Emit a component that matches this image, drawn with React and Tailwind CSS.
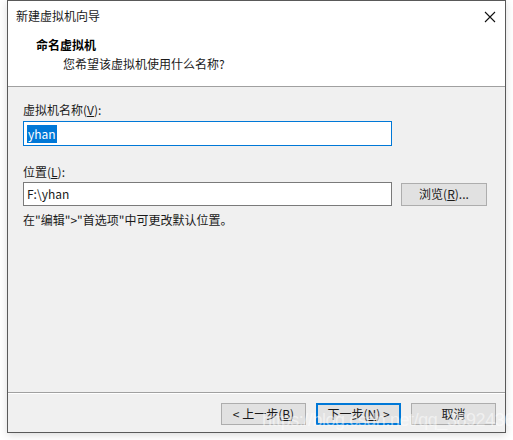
import React from "react";

const font = { fontFamily: '"Noto Sans CJK SC", "Noto Sans", sans-serif' };

function WinButton({ children, primary }) {
  return (
    <button
      className={`w-[85px] h-[22px] text-[12px] leading-none text-[#1a1a1a] bg-[#e1e1e1] ${
        primary ? "border-2 border-[#0078d7]" : "border border-[#adadad]"
      }`}
    >
      {children}
    </button>
  );
}

export default function App() {
  return (
    <div className="relative w-[513px] h-[440px] bg-white overflow-hidden" style={font}>
      <div className="ml-[7px] w-[499px] h-[433px] flex flex-col border border-[#595959] bg-[#f0f0f0] shadow-[0_2px_8px_rgba(0,0,0,0.15)]">
        {/* header */}
        <div className="h-[86px] bg-white border-b border-[#a0a0a0] relative">
          <div className="flex items-center justify-between pl-[8px] pr-[9px] pt-[6px]">
            <span className="text-[12px] text-[#1a1a1a]">新建虚拟机向导</span>
            <svg width="12" height="12" viewBox="0 0 12 12" className="mt-[1px]">
              <path d="M1 1 L11 11 M11 1 L1 11" stroke="#111" strokeWidth="1.1" />
            </svg>
          </div>
          <div className="pl-[28px] pt-[13px] text-[12px] font-bold text-black leading-[14px]">
            命名虚拟机
          </div>
          <div className="pl-[55px] pt-[5px] text-[12px] text-[#1a1a1a] leading-[14px]">
            您希望该虚拟机使用什么名称?
          </div>
        </div>

        {/* body */}
        <div className="flex-1 px-[15px] pt-[15px] text-[12px] text-[#1a1a1a]">
          <div className="leading-[16px]">
            虚拟机名称(<span className="underline">V</span>):
          </div>
          <div className="mt-[3px] w-[369px] h-[25px] bg-white border border-[#0078d7] flex items-center pl-[3px]">
            <span className="bg-[#0078d7] text-white leading-[18px] px-[1px]">yhan</span>
          </div>
          <div className="mt-[18px] leading-[16px]">
            位置(<span className="underline">L</span>):
          </div>
          <div className="mt-[2px] flex items-center gap-[9px]">
            <div className="w-[369px] h-[24px] bg-white border border-[#7a7a7a] flex items-center pl-[3px]">
              F:\yhan
            </div>
            <button className="w-[86px] h-[23px] bg-[#e1e1e1] border border-[#adadad] text-[12px] leading-none">
              浏览(<span className="underline">R</span>)...
            </button>
          </div>
          <div className="mt-[6px] leading-[16px]">在"编辑"&gt;"首选项"中可更改默认位置。</div>
        </div>

        {/* footer */}
        <div className="h-[40px] border-t border-[#a0a0a0] shadow-[inset_0_1px_0_#ffffff] flex items-start justify-end gap-[10px] pr-[9px] pt-[10px]">
          <WinButton>
            &lt; 上一步(<span className="underline">B</span>)
          </WinButton>
          <WinButton primary>
            下一步(<span className="underline">N</span>) &gt;
          </WinButton>
          <WinButton>取消</WinButton>
        </div>
      </div>

      {/* watermark */}
      <div
        className="absolute left-[262px] top-[407px] text-[18px] text-white/50 tracking-tight pointer-events-none whitespace-nowrap"
        style={{ fontFamily: '"Liberation Sans", sans-serif' }}
      >
        https://blog.csdn.net/qq_38924364
      </div>
    </div>
  );
}
